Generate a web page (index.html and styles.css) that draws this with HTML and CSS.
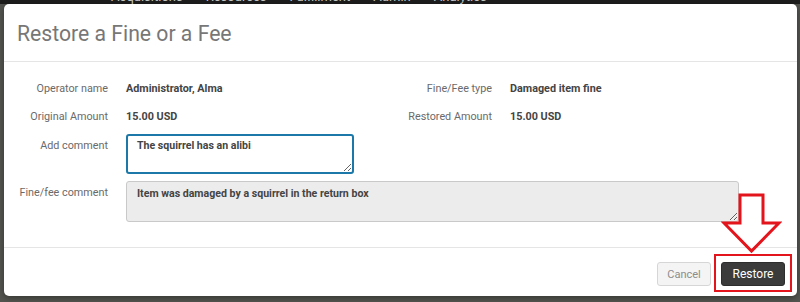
FILE: index.html
```html
<!DOCTYPE html>
<html>
<head>
<meta charset="utf-8">
<link rel="stylesheet" href="styles.css">
</head>
<body>
<div class="nav">
  <div class="nav-inner">
    <span class="nav-item nav-chev">»</span>
    <span class="nav-item nav-a">Acquisitions</span>
    <span class="nav-item">Resources</span>
    <span class="nav-item">Fulfillment</span>
    <span class="nav-item">Admin</span>
    <span class="nav-item">Analytics</span>
  </div>
</div>
<div class="modal">
  <div class="modal-header">
    <h1 class="modal-title">Restore a Fine or a Fee</h1>
  </div>
  <div class="modal-body">
    <div class="label">Operator name</div>
    <div class="value">Administrator, Alma</div>
    <div class="label">Fine/Fee type</div>
    <div class="value">Damaged item fine</div>

    <div class="label">Original Amount</div>
    <div class="value">15.00 USD</div>
    <div class="label">Restored Amount</div>
    <div class="value">15.00 USD</div>

    <div class="label label-top">Add comment</div>
    <div class="field-cell">
      <textarea class="ta ta-focus">The squirrel has an alibi</textarea>
    </div>

    <div class="label label-top">Fine/fee comment</div>
    <div class="field-cell field-wide">
      <textarea class="ta ta-readonly" readonly>Item was damaged by a squirrel in the return box</textarea>
    </div>
  </div>
  <div class="modal-footer">
    <button class="btn btn-cancel">Cancel</button>
    <button class="btn btn-primary">Restore</button>
  </div>
  <div class="highlight-box"></div>
  <svg class="arrow" width="61" height="62" viewBox="0 0 61 62">
    <path d="M19 2 H42 V30 H58 L30.5 58 L3 30 H19 Z" fill="#fff" stroke="#e3141b" stroke-width="3" stroke-linejoin="miter"/>
  </svg>
</div>
</body>
</html>
```
FILE: styles.css
```css
* { box-sizing: border-box; }
html, body { margin: 0; padding: 0; }
body {
  background: #53534f;
  font-family: Roboto, "Noto Sans", "Liberation Sans", sans-serif;
  width: 800px;
  height: 302px;
  overflow: hidden;
}
.nav {
  height: 4px;
  background: #1d1d1d;
  overflow: hidden;
}
.nav-inner {
  display: flex;
  margin-top: -11px;
  padding-left: 62px;
  font-size: 13px;
  line-height: 15px;
  color: #c8c8c8;
}
.nav-item { margin-right: 23px; }
.nav-chev { margin-right: 43px; }
.modal {
  position: relative;
  margin: 0 3px 0 4px;
  background: #fff;
  border-radius: 5px;
  height: 292px;
  box-shadow: 0 2px 6px rgba(0,0,0,0.35);
}
.modal-header {
  height: 58px;
  border-bottom: 1px solid #e5e5e5;
  padding: 0 13px;
  display: flex;
  align-items: center;
}
.modal-title {
  margin: 0;
  font-weight: 400;
  font-size: 21.2px;
  color: #777;
  padding-top: 1px;
}
.modal-body {
  display: grid;
  grid-template-columns: 104px 244px 104px 1fr;
  column-gap: 18px;
  row-gap: 7px;
  padding: 16px 0 25px 0;
  border-bottom: 1px solid #e5e5e5;
  font-size: 10.8px;
  line-height: 21px;
}
.label {
  text-align: right;
  color: #6a6a6a;
}
.label-top { padding-top: 1px; }
.value {
  color: #444;
  font-weight: 700;
}
.field-cell { grid-column: 2 / 5; }
.ta {
  display: block;
  font-family: Roboto, "Noto Sans", "Liberation Sans", sans-serif;
  font-size: 10.6px;
  font-weight: 700;
  color: #444;
  line-height: 14px;
  border-radius: 3px;
  resize: vertical;
  margin: 0;
  outline: none;
}
.ta-focus {
  width: 228px;
  height: 40px;
  border: 2px solid #1b78a8;
  padding: 3px 9px;
}
.ta-readonly {
  width: 613px;
  height: 41px;
  border: 1px solid #c9c9c9;
  background: #ececec;
  padding: 5px 10px;
}
.modal-footer {
  display: flex;
  justify-content: flex-end;
  gap: 10px;
  padding: 14px 12px 10px 0;
}
.btn {
  height: 24px;
  border-radius: 3px;
  font-family: Roboto, "Noto Sans", "Liberation Sans", sans-serif;
  font-size: 11px;
  padding: 0;
  cursor: pointer;
}
.btn-cancel {
  width: 54px;
  background: #f4f4f4;
  border: 1px solid #d6d6d6;
  color: #8c8c8c;
}
.btn-primary {
  width: 64px;
  background: #3b3b3b;
  border: 1px solid #2d2d2d;
  color: #fff;
  font-size: 12px;
}
.highlight-box {
  position: absolute;
  left: 710px;
  top: 250px;
  width: 78px;
  height: 38px;
  border: 2px solid #e3141b;
}
.arrow {
  position: absolute;
  left: 717px;
  top: 189px;
}
```
